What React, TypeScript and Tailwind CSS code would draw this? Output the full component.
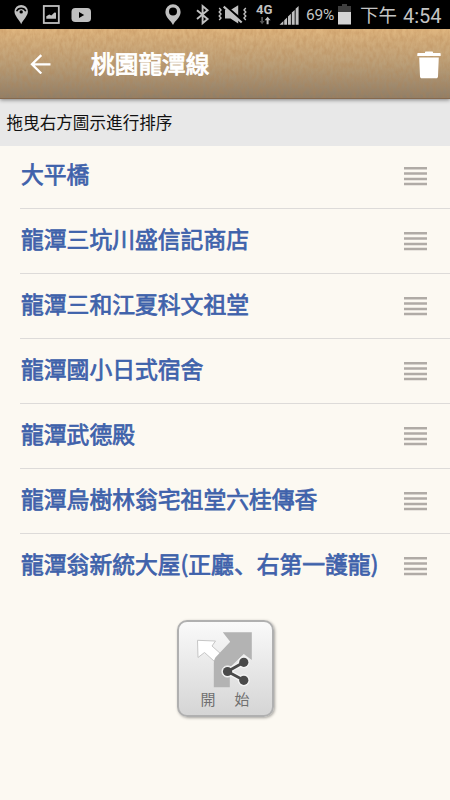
const STOPS = [
  "大平橋",
  "龍潭三坑川盛信記商店",
  "龍潭三和江夏科文祖堂",
  "龍潭國小日式宿舍",
  "龍潭武德殿",
  "龍潭烏樹林翁宅祖堂六桂傳香",
  "龍潭翁新統大屋(正廳、右第一護龍)",
];

function StatusBar() {
  return (
    <div className="flex h-[29px] shrink-0 bg-black text-[#c4c4c4]">
      <svg className="h-[29px] w-[306px] shrink-0" viewBox="0 0 306 29" fill="#c0c0c0">
        <path d="M21.2 24.3C19.4 20 14.5 16 14.5 11.6a6.7 6.7 0 0 1 13.4 0C27.9 16 23 20 21.2 24.3Z" />
        <path d="M16.6 11.2a5 5 0 0 1 9.2 0" fill="none" stroke="#000" strokeWidth="1.5" />
        <circle cx="21.2" cy="11.9" r="1.7" fill="#000" />

        <rect x="43.8" y="6" width="15" height="17" fill="none" stroke="#c0c0c0" strokeWidth="1.8" />
        <path d="M46.3 18.8v-2.6l3-1.8 2 1 3.2-3 1.5.3v6.1Z" />

        <rect x="71.5" y="8" width="19.5" height="14" rx="3.8" />
        <path d="m79 12 5.2 3-5.2 3Z" fill="#000" />

        <path
          fillRule="evenodd"
          d="M173 25c-2-4.7-7.6-7.4-7.6-13.1a7.6 7.6 0 0 1 15.2 0c0 5.7-5.6 8.4-7.6 13.1Zm0-17.5a4 4 0 1 0 0 8 4 4 0 0 0 0-8Z"
        />

        <path
          d="m197 10.2 10.6 8.8-5 4.2V6l5 4.2L197 19"
          fill="none"
          stroke="#c0c0c0"
          strokeWidth="1.9"
        />

        <path d="M225 10h5.5l7.7-4.8v18.3l-7.7-4.9H225Z" />
        <path d="m224.3 5.3 19 16.4" stroke="#000" strokeWidth="3" />
        <path d="m223.7 6.7 18 15.8" stroke="#c0c0c0" strokeWidth="2.2" />
        <path
          d="m219.2 8 1.8 2-1.8 2 1.8 2-1.8 2 1.8 2-1.8 2M245.8 8l-1.8 2 1.8 2-1.8 2 1.8 2-1.8 2 1.8 2"
          fill="none"
          stroke="#c0c0c0"
          strokeWidth="1.4"
        />

        <text
          x="256"
          y="13.6"
          fontSize="13"
          fontWeight="700"
          textLength="16.5"
          lengthAdjust="spacingAndGlyphs"
          fontFamily="Roboto, sans-serif"
        >
          4G
        </text>
        <path d="M261.2 17h1.8v4h1.6l-2.5 3.3-2.5-3.3h1.6Z" fill="#555" />
        <path d="M266.6 24.3h2v-4h2l-3-3.6-3 3.6h2Z" />

        <path d="M279.5 24.8 283.4 21v3.8ZM284.2 20.2l2.9-2.6v7.2h-2.9ZM288 16.4l2.9-2.6v11H288ZM291.8 12.6l2.9-2.7v14.9h-2.9ZM295.6 8.8l3-2.8v18.8h-3Z" />
      </svg>
      <div className="w-[32px] pt-[5px] font-['Roboto',sans-serif] text-[15.5px] leading-5 tracking-[-0.2px]">69%</div>
      <svg className="h-[29px] w-[20px] shrink-0" viewBox="338 0 20 29">
        <path d="M342 4h5v2h4v7h-13V6h4Z" fill="#3e3e3e" />
        <path d="M338 12h13v12.5h-13Z" fill="#d4d4d4" />
      </svg>
      <div className="flex text-[20px] leading-[29px] whitespace-nowrap">
        <span className="w-[45px] pl-[2px] font-['Noto_Sans_CJK_SC',sans-serif] text-[18.5px]">下午</span>
        <span className="pt-[2px] font-['Roboto',sans-serif]">4:54</span>
      </div>
    </div>
  );
}

function Header() {
  return (
    <header className="relative z-10 h-[70px] shrink-0 border-b border-[#85694e] bg-linear-to-b from-[#e0b67f] via-[#bb9f78] to-[#8f7e68] shadow-[0_1px_4px_rgba(0,0,0,0.45)]">
      <svg className="absolute inset-0 h-full w-full" aria-hidden="true">
        <filter id="paper" x="0" y="0" width="100%" height="100%" colorInterpolationFilters="sRGB">
          <feTurbulence type="fractalNoise" baseFrequency="0.3 0.15" numOctaves="3" seed="8" />
          <feColorMatrix values="0 0 0 0 0.7  0 0 0 0 0.5  0 0 0 0 0.3  0.6 0 0 0 -0.18" />
        </filter>
        <rect width="100%" height="100%" filter="url(#paper)" />
      </svg>
      <div className="relative flex h-full items-center pt-px">
        <svg className="ml-[30px] h-5 w-[21px]" viewBox="0 0 21 20" fill="none" stroke="#fff" strokeWidth="2.3">
          <path d="M20.5 10.3H2M11.3 1.1 2 10.3l9.3 9.2" />
        </svg>
        <h1 className="ml-[40px] grow pb-[3px] font-['Noto_Sans_CJK_SC',sans-serif] text-[23.7px] leading-8 text-white [-webkit-text-stroke:0.9px_#fff]">
          桃園龍潭線
        </h1>
        <svg className="mt-px mr-[9px] h-[28px] w-[24px]" viewBox="0 0 24 28" fill="#fff">
          <path d="M8 1.5C8 .8 8.4.5 9 .5h6c.6 0 1 .3 1 1v.6h7c.5 0 .7.3.7.7V5H.3V2.8c0-.4.3-.7.7-.7h7ZM2.2 6.6h19.6L21 25.5c-.1 1.1-.8 1.8-1.9 1.8H4.9c-1.1 0-1.8-.7-1.9-1.8Z" />
        </svg>
      </div>
    </header>
  );
}

function StopRow({ name }: { name: string }) {
  return (
    <li className="ml-5 flex h-[65px] items-center justify-between border-b border-[#dddbd9] pr-[23px] last:border-transparent">
      <span className="pb-[4px] pl-px font-['Noto_Sans_CJK_SC',sans-serif] text-[22.8px] leading-8 whitespace-nowrap text-[#3f62ab] [-webkit-text-stroke:0.75px_#3f62ab]">
        {name}
      </span>
      <svg className="h-[20px] w-[23px] shrink-0" viewBox="0 0 23 20" fill="none" stroke="#b0aba6" strokeWidth="2.5">
        <path d="M0 2.3h23M0 7.6h23M0 12.9h23M0 18.1h23" />
      </svg>
    </li>
  );
}

function StartButton() {
  return (
    <button className="flex h-[97px] w-[97px] flex-col items-center rounded-[10px] border-2 border-[#b0b0b0] bg-linear-to-b from-[#fafafa] to-[#d5d5d5] shadow-[1px_1px_3px_rgba(0,0,0,0.35)]">
      <svg className="mt-[7px] h-[62px] w-[62px] shrink-0" viewBox="0 0 62 62">
        <path
          d="M3.5 11.3 21.5 12 18 17l9.5 8.5-7 7-10-9L4 28.5Z"
          fill="#fff"
          stroke="#c6c6c6"
          strokeWidth="1"
        />
        <path d="M28.8 3.3H57.8V31l-8-6-14 13.5V58.3H19.8V34.5c0-3 .8-5.5 3-7.5L36.2 12.8Z" fill="#b3b3b3" />
        <g stroke="#f4f4f4" fill="#f4f4f4">
          <path d="m49.8 33.3-16.3 9.2 16.3 8.8" fill="none" strokeWidth="5.4" />
          <circle cx="49.8" cy="33.3" r="5.6" />
          <circle cx="33.5" cy="42.5" r="5.6" />
          <circle cx="49.8" cy="51.3" r="5.6" />
        </g>
        <path d="m49.8 33.3-16.3 9.2 16.3 8.8" fill="none" stroke="#4a4a4a" strokeWidth="2.8" />
        <g fill="#4a4a4a">
          <circle cx="49.8" cy="33.3" r="4.6" />
          <circle cx="33.5" cy="42.5" r="4.6" />
          <circle cx="49.8" cy="51.3" r="4.6" />
        </g>
      </svg>
      <span className="-mt-px flex gap-[19px] font-['Noto_Sans_CJK_TC',sans-serif] text-[15px] leading-[18px] text-[#707070]">
        <span>開</span>
        <span>始</span>
      </span>
    </button>
  );
}

export default function App() {
  return (
    <div className="flex h-[800px] w-[450px] flex-col overflow-hidden bg-[#fcf9f2]">
      <StatusBar />
      <Header />
      <p className="h-[47px] shrink-0 bg-[#e8e8e8] pl-[6.5px] font-['Noto_Sans_CJK_SC',sans-serif] text-[16.6px] leading-[46px] text-[#111]">
        拖曳右方圖示進行排序
      </p>
      <ul className="-mt-[2px] shrink-0">
        {STOPS.map((name) => (
          <StopRow key={name} name={name} />
        ))}
      </ul>
      <div className="mt-[21px] flex justify-center">
        <StartButton />
      </div>
    </div>
  );
}
